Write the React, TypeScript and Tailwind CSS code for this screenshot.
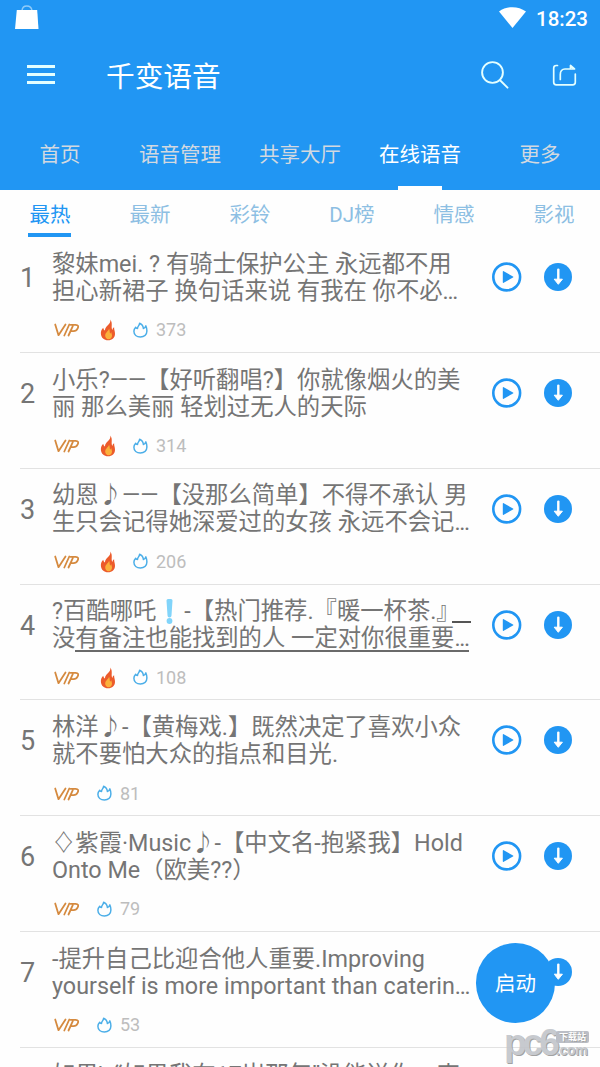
import React from 'react';

interface Song {
  id: number;
  lines: React.ReactNode[];
  hot?: boolean;
  count: string;
}

const mainTabs = ['首页', '语音管理', '共享大厅', '在线语音', '更多'];

const subTabs = [
  { label: '最热', width: 'w-[100px]' },
  { label: '最新', width: 'w-[100px]' },
  { label: '彩铃', width: 'w-[100px]' },
  { label: 'DJ榜', width: 'w-[104px]' },
  { label: '情感', width: 'w-[100px]' },
  { label: '影视', width: 'w-[100px]' },
];

const BlueMark = () => (
  <svg className="mr-[3px] inline-block h-[25px] w-[25px] align-[-5px]" viewBox="0 0 25 25" fill="#81d4fa">
    <path d="M10.500 1.500a1.500 1.500 0 0 1 1.500-1.500h3a1.500 1.500 0 0 1 1.500 1.500l-1 15a2 2 0 0 1-4 0z" />
    <circle cx="13.500" cy="22" r="2.900" />
  </svg>
);

const Dots = () => <span className="tracking-[-1.300px]">...</span>;

const songs: Song[] = [
  { id: 1, lines: ['黎妹mei. ? 有骑士保护公主 永远都不用', <>担心新裙子 换句话来说 有我在 你不必<Dots /></>], hot: true, count: '373' },
  { id: 2, lines: ['小乐?——【好听翻唱?】你就像烟火的美', '丽 那么美丽 轻划过无人的天际'], hot: true, count: '314' },
  { id: 3, lines: ['幼恩♪——【没那么简单】不得不承认 男', <>生只会记得她深爱过的女孩 永远不会记<Dots /></>], hot: true, count: '206' },
  {
    id: 4,
    lines: [
      <>?百酷哪吒<BlueMark />-【热门推荐.『暖一杯茶.』<span className="ml-[-8px] inline-block h-[2px] w-[19px] bg-[#555] align-[-4px]" /></>,
      <>没<span className="inline-block h-[27px] border-b-2 border-[#6a6a6a] align-top">有备注也能找到的人 一定对你很重要<Dots /></span></>,
    ],
    hot: true,
    count: '108',
  },
  { id: 5, lines: ['林洋♪-【黄梅戏.】既然决定了喜欢小众', '就不要怕大众的指点和目光.'], count: '81' },
  { id: 6, lines: ['♢紫霞·Music♪-【中文名-抱紧我】Hold', 'Onto Me（欧美??）'], count: '79' },
  { id: 7, lines: ['-提升自己比迎合他人重要.Improving', <>yourself is more important than caterin<Dots /></>], count: '53' },
  { id: 8, lines: ['如果\\ “如果我在17岁那年”没能送你一束'], count: '50' },
];

const VipIcon = () => (
  <svg className="ml-[2px] h-[14px] w-[26px]" viewBox="0 0 26 14" fill="none" stroke="#d58a3f" strokeWidth="1.800" strokeLinecap="round" strokeLinejoin="round">
    <path d="M1.200 1.500l3.300 10.700L11.500 1.500" />
    <path d="M15.300 1.500l-5 11" />
    <path d="M14.500 12.500l4.300-9.300M16.500 1.800h5.200c2.600 0 3 1.600 2 3.600-1 2-2.400 2.700-4.200 2.700h-1.600" />
  </svg>
);

const FireIcon = () => (
  <svg className="h-[22px] w-[16px]" viewBox="0 0 16 22">
    <path d="M10.200.5c.8 3-1.500 4.700-3.200 6.600C5.500 8.800 5 10 5 11.500 3.800 11 3.300 9.800 3.300 8.700 1.500 10.300.7 12.500.9 15c.3 3.800 3.200 6.300 7.100 6.300 4.200 0 7-2.700 7-6.600 0-2.400-1-4.100-.9-6.400-1 .5-1.500 1.400-1.600 2.600C10.500 8.500 13.300 4.200 10.200.5z" fill="#ec5b2b" />
    <path d="M9 9.500c.3 2-3.800 3.800-3.800 7 0 2 1.300 3.700 3.300 3.700 2.200 0 3.500-1.600 3.500-3.500 0-1.400-.6-2.300-.6-3.500-.7.4-1 .8-1.200 1.600C9.500 13.500 10 11.500 9 9.500z" fill="#fbb03b" />
  </svg>
);

const FlameIcon = () => (
  <svg className="mt-[-1px] h-[16px] w-[15px]" viewBox="0 0 15 16" fill="none" stroke="#4baee8" strokeWidth="1.500" strokeLinejoin="round">
    <path d="M6.600 1.200C6.800 3.400 4.500 3.800 4.500 6.600 3.600 6.400 3 6 2.700 5.200 1.500 6.400.9 7.700.9 9.200c0 3.400 2.800 5.800 6.500 5.800s6.500-2.400 6.500-5.900c0-1.900-.4-3.700-1.100-5.200-.4 1.400-1.200 2.300-2.400 2.600C10.200 4.100 8.800 2 6.600 1.200z" />
  </svg>
);

const PlayIcon = () => (
  <svg className="h-[30px] w-[30px]" viewBox="0 0 30 30">
    <circle cx="14.700" cy="15" r="13.400" fill="none" stroke="#2196f3" strokeWidth="2.600" />
    <path d="M10.800 9.700v10.600a.6.600 0 0 0 .9.500l9.300-5.300a.6.600 0 0 0 0-1l-9.300-5.300a.6.600 0 0 0-.9.500z" fill="#2196f3" />
  </svg>
);

const DownloadIcon = () => (
  <svg className="h-[28px] w-[28px]" viewBox="0 0 28 28">
    <circle cx="14" cy="14" r="14" fill="#2196f3" />
    <path d="M14.300 6.600v11" stroke="#fff" strokeWidth="2.400" strokeLinecap="round" />
    <path d="M10.200 16.200h8.200l-4.100 5.100z" fill="#fff" stroke="#fff" strokeWidth="1" strokeLinejoin="round" />
  </svg>
);

const SongRow = ({ song }: { song: Song }) => (
  <li className="ml-5 flex h-[115.850px] border-b border-[#e2e2e2]">
    <span className="w-8 shrink-0 pt-[25px] text-[27px] leading-[32px] text-[#757575]">{song.id}</span>
    <div className="w-[420px] shrink-0 pt-[13.700px] text-[23.330px] leading-[27px] text-[#757575]">
      {song.lines.map((line, i) => (
        <p key={i} className="h-[27px] whitespace-nowrap">{line}</p>
      ))}
      <div className="mt-[14.500px] flex h-[22px] items-center">
        <VipIcon />
        {song.hot && <span className="ml-[20px]"><FireIcon /></span>}
        <span className="ml-[17px]"><FlameIcon /></span>
        <span className="ml-2 text-[18px] leading-[22px] text-[#bdbdbd]">{song.count}</span>
      </div>
    </div>
    <button className="ml-5 mt-[25px] h-[30px]"><PlayIcon /></button>
    <button className="ml-[22px] mt-[26px] h-[28px]"><DownloadIcon /></button>
  </li>
);

const Watermark = () => (
  <div className="absolute left-[504px] top-[1026px] flex h-9 items-start font-['Liberation_Sans'] font-bold text-[#c2c5ca] opacity-90 [text-shadow:1px_1px_0_#999]">
    <span className="w-[50px] text-[37px] leading-[33px] tracking-[-4px]">pc6</span>
    <div className="ml-[2px] w-[34px] pt-[5px]">
      <div className="flex h-[12px] w-[33px] items-center justify-center rounded-[2px] bg-[#b4b8c0] font-['Noto_Sans_CJK_SC'] text-[9px] leading-[12px] text-white">下载站</div>
      <div className="text-[14px] leading-[14px] tracking-[-0.300px]">.com</div>
    </div>
  </div>
);

const App: React.FC = () => {
  return (
    <div className="relative h-[1067px] w-[600px] overflow-hidden bg-[#fefefe] font-[Roboto,'Noto_Sans_CJK_SC',sans-serif]">
      <header className="h-[190px] bg-[#2196f3] text-white">
        <div className="flex h-[37px] items-center justify-between pl-[15px] pr-3">
          <svg className="mt-[-3px] h-[24px] w-[24px]" viewBox="0 0 24 24">
            <path d="M7 5.500C7.500-.5 16-.5 17 5.500" fill="none" stroke="#90cbf9" strokeWidth="1.400" />
            <path d="M1.800 5h20.400L23.500 24H0z" fill="#fff" />
          </svg>
          <div className="flex items-center gap-[10px]">
            <svg className="mt-[-3px] h-[21px] w-[27px]" viewBox="0 0 27 21">
              <path d="M0 4.500C8-1.300 19-1.300 27 4.500L13.500 21z" fill="#fff" />
            </svg>
            <span className="text-[20.500px] font-medium leading-6">18:23</span>
          </div>
        </div>

        <div className="flex h-[76px] items-center pl-[27px] pr-[23px]">
          <div className="mt-[-1px] flex w-[28px] flex-col gap-[5px]">
            <span className="h-[3px] bg-[#e4ffff]" />
            <span className="h-[3px] bg-[#e4ffff]" />
            <span className="h-[3px] bg-[#e4ffff]" />
          </div>
          <h1 className="ml-[51px] mt-[3px] text-[28.700px] leading-8">千变语音</h1>
          <svg className="ml-auto h-[28px] w-[28px]" viewBox="0 0 28 28" fill="none" stroke="#e4ffff" strokeWidth="1.900" strokeLinecap="round">
            <circle cx="11.500" cy="11.500" r="10.400" />
            <path d="M18.800 19l7.700 7.700" />
          </svg>
          <svg className="ml-[43px] h-[24px] w-[25px]" viewBox="0 0 25 24" fill="none" stroke="#e4ffff" strokeWidth="1.700" strokeLinecap="round" strokeLinejoin="round">
            <path d="M5.500 2.500H4.300A2.600 2.600 0 0 0 1.700 5v14.200a2.600 2.600 0 0 0 2.600 2.600h16.400a2.600 2.600 0 0 0 2.600-2.600V11" />
            <path d="M8.300 16.500v-5c0-3.300 1.700-5.500 4.700-5.500h9.500L18.500 2.500V6" />
          </svg>
        </div>

        <nav className="flex h-[77px]">
          {mainTabs.map((tab, i) => (
            <div key={tab} className="relative flex w-[120px] justify-center">
              <span className={`pt-[27px] text-[20.500px] leading-[30px] ${i === 3 ? 'text-white' : 'text-[#d3d9e0]'}`}>{tab}</span>
              {i === 3 && <span className="absolute bottom-0 h-[4px] w-[44px] bg-white" />}
            </div>
          ))}
        </nav>
      </header>

      <nav className="flex h-[47px]">
        {subTabs.map((tab, i) => (
          <div key={tab.label} className={`relative flex shrink-0 justify-center ${tab.width}`}>
            <span className={`pt-[10px] text-[20.500px] leading-[30px] ${i === 0 ? 'text-[#2196f3]' : 'text-[#8dbfe3]'}`}>{tab.label}</span>
            {i === 0 && <span className="absolute left-[28px] top-[43px] h-[4px] w-[43px] bg-[#2196f3]" />}
          </div>
        ))}
      </nav>

      <ul>
        {songs.map((song) => (
          <SongRow key={song.id} song={song} />
        ))}
      </ul>

      <button className="absolute left-[476px] top-[943px] h-[80px] w-[79px] rounded-full bg-[#2196f3] pt-[2px] text-[20.500px] text-white">启动</button>
      <Watermark />
    </div>
  );
};

export default App;
